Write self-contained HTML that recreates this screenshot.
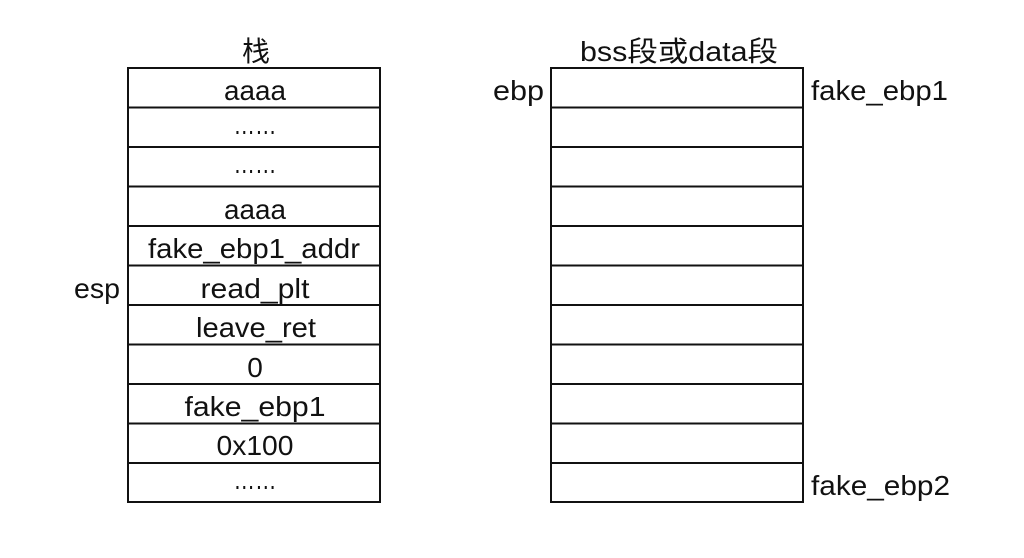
<!DOCTYPE html>
<html><head><meta charset="utf-8"><style>
html,body{margin:0;padding:0;background:#fff;}
svg{display:block}
text{font-family:"Liberation Sans","Noto Sans CJK SC",sans-serif;font-size:28px;fill:#111;}
</style></head><body>
<svg width="1024" height="558" viewBox="0 0 1024 558" xmlns="http://www.w3.org/2000/svg">
<g stroke="#111" stroke-width="2" fill="none">
<rect x="128" y="68" width="252" height="434"/>
<rect x="551" y="68" width="252" height="434"/>
<line x1="128" y1="107.5" x2="380" y2="107.5"/><line x1="551" y1="107.5" x2="803" y2="107.5"/>
<line x1="128" y1="147" x2="380" y2="147"/><line x1="551" y1="147" x2="803" y2="147"/>
<line x1="128" y1="186.5" x2="380" y2="186.5"/><line x1="551" y1="186.5" x2="803" y2="186.5"/>
<line x1="128" y1="226" x2="380" y2="226"/><line x1="551" y1="226" x2="803" y2="226"/>
<line x1="128" y1="265.5" x2="380" y2="265.5"/><line x1="551" y1="265.5" x2="803" y2="265.5"/>
<line x1="128" y1="305" x2="380" y2="305"/><line x1="551" y1="305" x2="803" y2="305"/>
<line x1="128" y1="344.5" x2="380" y2="344.5"/><line x1="551" y1="344.5" x2="803" y2="344.5"/>
<line x1="128" y1="384" x2="380" y2="384"/><line x1="551" y1="384" x2="803" y2="384"/>
<line x1="128" y1="423.5" x2="380" y2="423.5"/><line x1="551" y1="423.5" x2="803" y2="423.5"/>
<line x1="128" y1="463" x2="380" y2="463"/><line x1="551" y1="463" x2="803" y2="463"/>
</g>
<g text-anchor="middle">
<text x="256" y="61" font-size="30">栈</text>
<text x="679" y="61" textLength="198" lengthAdjust="spacingAndGlyphs">bss段或data段</text>
<text x="255" y="100" textLength="62" lengthAdjust="spacingAndGlyphs">aaaa</text>
<text x="255" y="134" font-size="18" textLength="43" lengthAdjust="spacingAndGlyphs">……</text>
<text x="255" y="173" font-size="18" textLength="43" lengthAdjust="spacingAndGlyphs">……</text>
<text x="255" y="219" textLength="62" lengthAdjust="spacingAndGlyphs">aaaa</text>
<text x="254" y="258" textLength="212" lengthAdjust="spacingAndGlyphs">fake_ebp1_addr</text>
<text x="255" y="298" textLength="109" lengthAdjust="spacingAndGlyphs">read_plt</text>
<text x="256" y="337" textLength="120" lengthAdjust="spacingAndGlyphs">leave_ret</text>
<text x="255" y="377">0</text>
<text x="255" y="416" textLength="141" lengthAdjust="spacingAndGlyphs">fake_ebp1</text>
<text x="255" y="455" textLength="77" lengthAdjust="spacingAndGlyphs">0x100</text>
<text x="255" y="489" font-size="18" textLength="43" lengthAdjust="spacingAndGlyphs">……</text>
</g>
<text x="74" y="298" textLength="46" lengthAdjust="spacingAndGlyphs">esp</text>
<text x="493" y="100" textLength="51" lengthAdjust="spacingAndGlyphs">ebp</text>
<text x="811" y="100" textLength="137" lengthAdjust="spacingAndGlyphs">fake_ebp1</text>
<text x="811" y="495" textLength="139" lengthAdjust="spacingAndGlyphs">fake_ebp2</text>
</svg>
</body></html>
